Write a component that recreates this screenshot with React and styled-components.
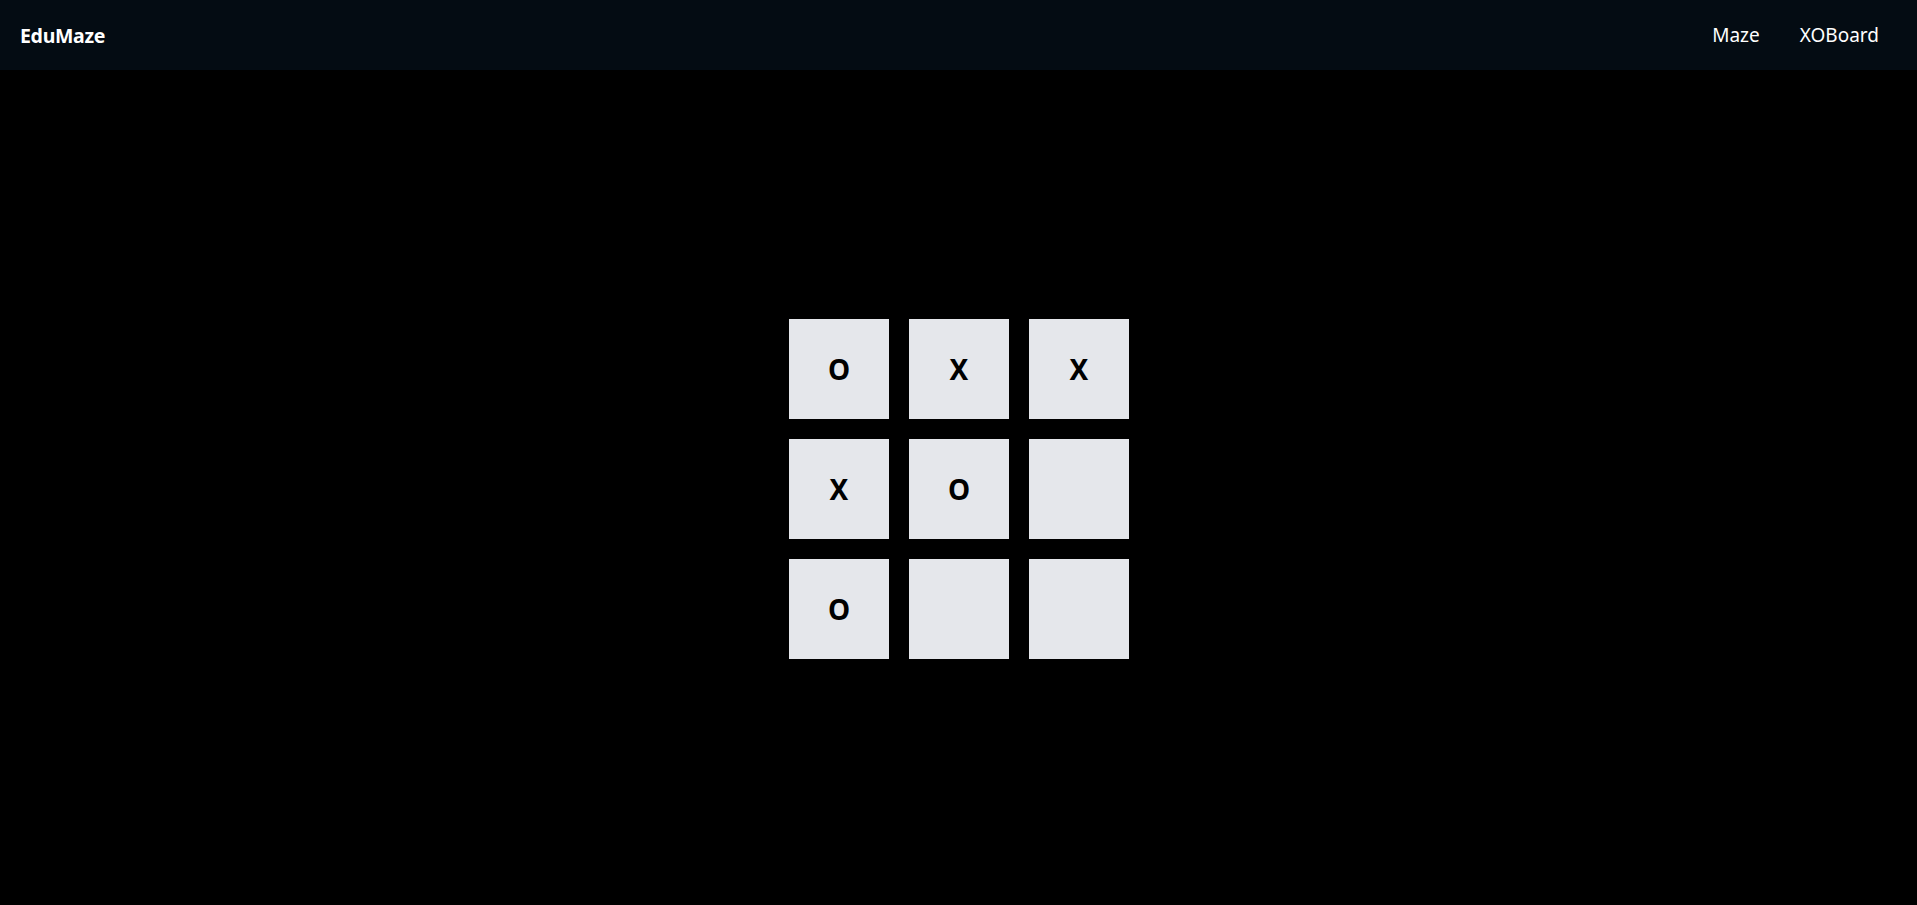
import React from 'react';
import styled, { createGlobalStyle } from 'styled-components';

const board = ['O', 'X', 'X', 'X', 'O', '', 'O', '', ''];

const GlobalStyle = createGlobalStyle`
  html, body {
    margin: 0;
    padding: 0;
    background: #000;
  }
  body {
    font-family: "Segoe UI", "Noto Sans", "Open Sans", sans-serif;
    color: #fff;
  }
`;

const Header = styled.header`
  height: 70px;
  background: #040c13;
  display: flex;
  align-items: center;
  justify-content: space-between;
  padding: 0 20px;
  box-sizing: border-box;
`;

const Logo = styled.div`
  font-size: 19.5px;
  font-weight: 700;
  color: #fff;
  letter-spacing: -0.3px;
`;

const Nav = styled.nav`
  display: flex;
  gap: 40px;
  padding-right: 18px;
`;

const NavLink = styled.a`
  font-size: 19px;
  color: #fff;
  text-decoration: none;
  cursor: pointer;
`;

const Main = styled.main`
  min-height: calc(100vh - 70px);
  display: flex;
  align-items: center;
  justify-content: center;
  padding-top: 3px;
  box-sizing: border-box;
`;

const Grid = styled.div`
  display: grid;
  grid-template-columns: repeat(3, 100px);
  grid-auto-rows: 100px;
  gap: 20px;
`;

const Cell = styled.button`
  border: none;
  padding: 0 0 0 1px;
  background: #e5e7eb;
  color: #000;
  font-family: "Segoe UI", "Noto Sans", "Open Sans", sans-serif;
  font-size: 28px;
  font-weight: 700;
  display: flex;
  align-items: center;
  justify-content: center;
  cursor: pointer;
`;

export default function App() {
  return (
    <>
      <GlobalStyle />
      <Header>
        <Logo>EduMaze</Logo>
        <Nav>
          <NavLink>Maze</NavLink>
          <NavLink>XOBoard</NavLink>
        </Nav>
      </Header>
      <Main>
        <Grid>
          {board.map((v, i) => (
            <Cell key={i}>{v}</Cell>
          ))}
        </Grid>
      </Main>
    </>
  );
}
